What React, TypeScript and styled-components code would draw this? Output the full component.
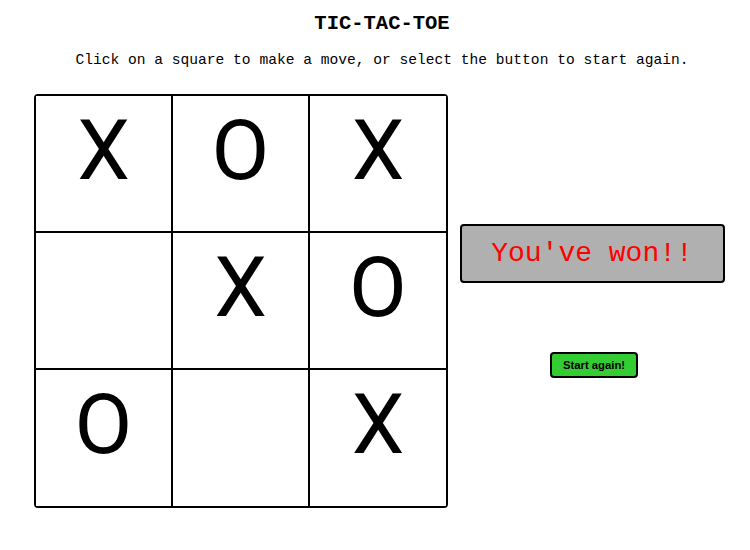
import React from "react";
import styled, { createGlobalStyle } from "styled-components";

const GlobalStyle = createGlobalStyle`
  body {
    margin: 0;
    background: #fff;
    font-family: "Liberation Mono", monospace;
  }
`;

const Page = styled.div`
  width: 750px;
  height: 550px;
  padding: 12px 0 0 14px;
  box-sizing: border-box;
`;

const Title = styled.h1`
  margin: 0;
  text-align: center;
  font-size: 20.5px;
  line-height: 24px;
  font-weight: bold;
  color: #000;
`;

const Instructions = styled.p`
  margin: 15px 0 0;
  text-align: center;
  font-size: 14.6px;
  line-height: 18px;
  color: #000;
`;

const GameRow = styled.div`
  display: flex;
  align-items: flex-start;
  gap: 11px;
  margin: 25px 0 0 20px;
`;

const Board = styled.div`
  display: grid;
  grid-template-columns: 137px 137px 136px;
  grid-template-rows: 137px 137px 136px;
  border: 2px solid #000;
  border-radius: 4px;
  width: fit-content;
`;

const Square = styled.button<{ $col: number; $row: number }>`
  box-sizing: border-box;
  margin: 0;
  padding: 5px 0 0;
  background: #fff;
  border: none;
  border-right: ${(p) => (p.$col < 2 ? "2px solid #000" : "none")};
  border-bottom: ${(p) => (p.$row < 2 ? "2px solid #000" : "none")};
  font-family: Roboto, "Liberation Sans", sans-serif;
  font-size: 84px;
  line-height: normal;
  color: #000;
  display: flex;
  justify-content: center;
  align-items: flex-start;
  cursor: pointer;
`;

const SidePanel = styled.div`
  display: flex;
  flex-direction: column;
  align-items: center;
  padding-top: 130px;
  width: 266px;
`;

const Result = styled.div`
  box-sizing: border-box;
  width: 265px;
  height: 59px;
  background: #b0b0b0;
  border: 2px solid #000;
  border-radius: 4px;
  display: flex;
  align-items: center;
  justify-content: center;
  color: #ff0000;
  font-size: 28px;
`;

const RestartButton = styled.button`
  margin-top: 69px;
  margin-left: 4px;
  height: 26px;
  padding: 0 11px;
  background: #33cc33;
  border: 2px solid #000;
  border-radius: 4px;
  font-family: "Liberation Sans", Arial, sans-serif;
  font-weight: bold;
  font-size: 11.3px;
  color: #000;
  cursor: pointer;
`;

const squares = ["X", "O", "X", "", "X", "O", "O", "", "X"];

export default function App() {
  return (
    <Page>
      <GlobalStyle />
      <Title>TIC-TAC-TOE</Title>
      <Instructions>
        Click on a square to make a move, or select the button to start again.
      </Instructions>
      <GameRow>
        <Board>
          {squares.map((value, i) => (
            <Square key={i} $col={i % 3} $row={Math.floor(i / 3)}>
              {value}
            </Square>
          ))}
        </Board>
        <SidePanel>
          <Result>You've won!!</Result>
          <RestartButton>Start again!</RestartButton>
        </SidePanel>
      </GameRow>
    </Page>
  );
}
